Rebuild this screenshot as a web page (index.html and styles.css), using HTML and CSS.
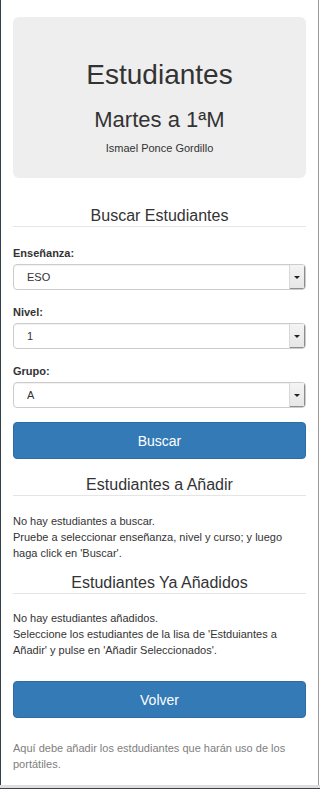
FILE: index.html
```html
<!DOCTYPE html>
<html lang="es">
<head>
    <meta charset="UTF-8">
    <meta name="viewport" content="width=device-width, initial-scale=1.0">
    <title>Estudiantes</title>
    <link rel="stylesheet" href="styles.css">
</head>
<body>

<div class="window">
    <div class="container">
        <div class="jumbotron">
            <h1>Estudiantes</h1>
            <h2>Martes a 1ªM</h2>
            <p>Ismael Ponce Gordillo</p>
        </div>

        <h3 class="section-title search-title">Buscar Estudiantes</h3>
        <form id="searchForm">
            <div class="field">
                <label for="ensenanza">Enseñanza:</label>
                <div class="select">
                    <select id="ensenanza" name="ensenanza">
                        <option value="ESO">ESO</option>
                        <option value="BACH">Bachillerato</option>
                    </select>
                    <span class="arrow"></span>
                </div>
            </div>

            <div class="field">
                <label for="nivel">Nivel:</label>
                <div class="select">
                    <select id="nivel" name="nivel">
                        <option value="1">1</option>
                        <option value="2">2</option>
                        <option value="3">3</option>
                        <option value="4">4</option>
                    </select>
                    <span class="arrow"></span>
                </div>
            </div>

            <div class="field">
                <label for="grupo">Grupo:</label>
                <div class="select">
                    <select id="grupo" name="grupo">
                        <option value="A">A</option>
                        <option value="B">B</option>
                        <option value="C">C</option>
                    </select>
                    <span class="arrow"></span>
                </div>
            </div>

            <button type="submit" class="btn btn-search">Buscar</button>
        </form>

        <h3 class="section-title add-title">Estudiantes a Añadir</h3>
        <p class="info add-info">No hay estudiantes a buscar.<br>
            Pruebe a seleccionar enseñanza, nivel y curso; y luego haga click en 'Buscar'.</p>

        <h3 class="section-title added-title">Estudiantes Ya Añadidos</h3>
        <p class="info added-info">No hay estudiantes añadidos.<br>
            Seleccione los estudiantes de la lisa de 'Estduiantes a Añadir' y pulse en 'Añadir Seleccionados'.</p>

        <button type="button" class="btn btn-back">Volver</button>

        <p class="help">Aquí debe añadir los estdudiantes que harán uso de los portátiles.</p>
    </div>
</div>
<div class="statusbar"></div>

</body>
</html>
```

FILE: styles.css
```css
body {
    margin: 0;
    font-family: "Liberation Sans", Arial, sans-serif;
    color: #333;
    background: white;
}
.window {
    width: 319px;
    height: 785px;
    box-sizing: border-box;
    border-left: 1px solid #34404a;
    border-right: 1px solid #9a9a9a;
    overflow: hidden;
}
.statusbar {
    height: 3px;
    background: #dedede;
    border-bottom: 1px solid #3a4148;
}
.container {
    padding: 17px 12px 0 12px;
}
.jumbotron {
    background: #eeeeee;
    border-radius: 6px;
    height: 161px;
    box-sizing: border-box;
    padding-top: 41px;
    text-align: center;
}
.jumbotron h1 {
    margin: 0;
    font-size: 28px;
    line-height: 34px;
    font-weight: normal;
}
.jumbotron h2 {
    margin: 15px 0 0 0;
    font-size: 22px;
    line-height: 26px;
    font-weight: normal;
}
.jumbotron p {
    margin: 7px 0 0 0;
    font-size: 11px;
    line-height: 16px;
}
.section-title {
    margin: 0;
    font-size: 16px;
    line-height: 20px;
    font-weight: normal;
    text-align: center;
    border-bottom: 1px solid #e5e5e5;
}
.search-title {
    margin-top: 28px;
}
.add-title {
    margin-top: 16px;
}
.added-title {
    margin-top: 12px;
}
form {
    margin-top: 18px;
}
label {
    display: block;
    font-size: 11px;
    line-height: 16px;
    font-weight: bold;
    margin-bottom: 3px;
}
.field {
    margin-bottom: 14px;
}
.select {
    display: flex;
    height: 26px;
    box-sizing: border-box;
    border: 1px solid #cccccc;
    border-radius: 4px;
    overflow: hidden;
    box-shadow: inset 0 1px 1px rgba(0, 0, 0, 0.06);
}
.select select {
    flex: 1;
    appearance: none;
    -webkit-appearance: none;
    border: none;
    background: transparent;
    font-family: inherit;
    font-size: 11px;
    color: #333;
    padding: 0 0 0 13px;
    margin: 0;
    height: 24px;
    outline: none;
}
.arrow {
    width: 15px;
    background: linear-gradient(#f4f4f4, #e6e6e6);
    border-left: 1px solid #d8d8d8;
    box-shadow: inset -1px -1px 0 #8e8e8e;
    display: flex;
    align-items: center;
    justify-content: center;
}
.arrow::after {
    content: "";
    border-left: 3px solid transparent;
    border-right: 3px solid transparent;
    border-top: 3px solid #222;
    margin-right: 1px;
}
.btn {
    display: block;
    width: 100%;
    height: 37px;
    background: #337ab7;
    color: white;
    border: 1px solid #2e6da4;
    border-radius: 4px;
    font-family: inherit;
    font-size: 14px;
    cursor: pointer;
}
.info {
    font-size: 11px;
    line-height: 16px;
    margin: 0;
}
.add-info {
    margin-top: 17px;
}
.added-info {
    margin-top: 16px;
}
.btn-back {
    margin-top: 23px;
}
.help {
    margin: 22px 0 0 0;
    font-size: 11px;
    line-height: 16px;
    color: #808080;
}
```
